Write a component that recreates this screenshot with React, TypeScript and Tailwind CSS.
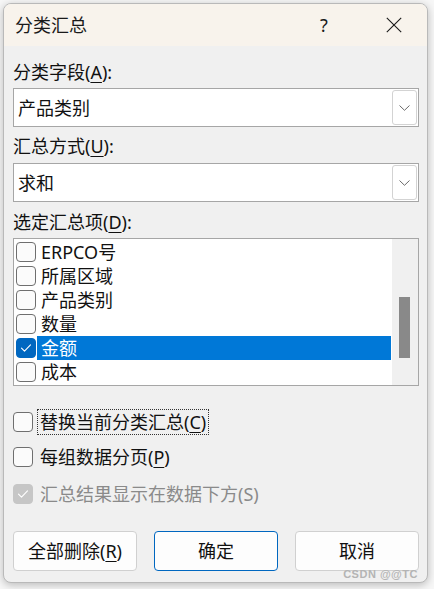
import React from "react";

function Check({ color = "#ffffff" }: { color?: string }) {
  return (
    <svg width="12" height="10" viewBox="0 0 12 10" fill="none">
      <path d="M1.5 5.2 L4.5 8.2 L10.5 1.8" stroke={color} strokeWidth="1.1" strokeLinecap="round" strokeLinejoin="round" />
    </svg>
  );
}

function Box({ checked, disabled }: { checked?: boolean; disabled?: boolean }) {
  if (checked && disabled) {
    return (
      <div className="w-[20px] h-[20px] shrink-0 rounded-[4px] bg-[#c6c6c6] border border-[#c6c6c6] flex items-center justify-center">
        <Check />
      </div>
    );
  }
  if (checked) {
    return (
      <div className="w-[20px] h-[20px] shrink-0 rounded-[4px] bg-[#0067c0] border border-[#0067c0] flex items-center justify-center">
        <Check />
      </div>
    );
  }
  return <div className="w-[20px] h-[20px] shrink-0 rounded-[4px] bg-[#fbfbfb] border border-[#6f6f6f]" />;
}

function Combo({ value }: { value: string }) {
  return (
    <div className="h-[39px] border border-[#a6a6a6] bg-white flex items-center pl-[4px] pr-[1px]">
      <span className="flex-1 text-[18px] leading-[24px] text-[#111]">{value}</span>
      <div className="w-[25px] h-[35px] border border-[#d3d3d3] rounded-[3px] bg-white flex items-center justify-center">
        <svg width="11" height="6" viewBox="0 0 11 6" fill="none">
          <path d="M0.5 0.5 L5.5 5.3 L10.5 0.5" stroke="#6a6a6a" strokeWidth="1" />
        </svg>
      </div>
    </div>
  );
}

const items = ["ERPCO号", "所属区域", "产品类别", "数量", "金额", "成本"];

export default function App() {
  return (
    <div className="w-[434px] h-[589px] overflow-hidden bg-[#f7f7f7] pt-[3px] pl-[3px] font-['Noto_Sans','Noto_Sans_CJK_SC',sans-serif] text-[#111]">
      <div className="relative w-[425px] h-[580px] rounded-[8px] border border-[#b9b9b9] bg-[#f0f0f0] overflow-hidden shadow-[0_2px_8px_rgba(0,0,0,0.25)] flex flex-col">
        {/* title bar */}
        <div className="h-[42px] shrink-0 bg-[#f8f3ec] flex items-center pl-[11px]">
          <span className="text-[18px] leading-[24px] text-[#1a1a1a]">分类汇总</span>
          <span className="ml-auto w-[40px] text-center text-[18px] leading-[24px] text-[#1a1a1a] mr-[30px]">?</span>
          <div className="w-[40px] flex items-center justify-center mr-[13px]">
            <svg width="16" height="16" viewBox="0 0 16 16" fill="none">
              <path d="M0.8 0.8 L15.2 15.2 M15.2 0.8 L0.8 15.2" stroke="#1a1a1a" strokeWidth="1.1" />
            </svg>
          </div>
        </div>

        {/* body */}
        <div className="flex flex-col pl-[9px] pr-[8px] pt-[14px]">
          <div className="text-[18px] leading-[24px]">
            分类字段(<span className="underline underline-offset-[3px] decoration-1">A</span>):
          </div>
          <div className="mt-[4px]">
            <Combo value="产品类别" />
          </div>

          <div className="mt-[7px] text-[18px] leading-[24px]">
            汇总方式(<span className="underline underline-offset-[3px] decoration-1">U</span>):
          </div>
          <div className="mt-[5px]">
            <Combo value="求和" />
          </div>

          <div className="mt-[8px] text-[18px] leading-[24px]">
            选定汇总项(<span className="underline underline-offset-[3px] decoration-1">D</span>):
          </div>
          <div className="mt-[4px] h-[148px] border border-[#a6a6a6] bg-white flex">
            <div className="flex-1 flex flex-col pt-[1px] pl-[2px] pr-[1px]">
              {items.map((t) => {
                const sel = t === "金额";
                return (
                  <div key={t} className="h-[24px] flex items-center">
                    <Box checked={sel} />
                    <div
                      className={
                        sel
                          ? "ml-[1px] flex-1 h-[24px] pl-[4px] bg-[#0078d7] text-white text-[18px] leading-[24px]"
                          : "ml-[1px] flex-1 h-[24px] pl-[4px] text-[18px] leading-[24px]"
                      }
                    >
                      {t}
                    </div>
                  </div>
                );
              })}
            </div>
            <div className="w-[26px] bg-[#f0f0f0] flex flex-col pt-[58px] pl-[7px]">
              <div className="w-[11px] h-[61px] bg-[#898989]" />
            </div>
          </div>

          <div className="mt-[23px] h-[26px] flex items-center">
            <Box />
            <div className="ml-[4px] h-[26px] px-[2px] border border-dotted border-[#333] flex items-center text-[18px] leading-[24px]">
              替换当前分类汇总(<span className="underline underline-offset-[3px] decoration-1">C</span>)
            </div>
          </div>
          <div className="mt-[9px] h-[26px] flex items-center">
            <Box />
            <div className="ml-[4px] h-[26px] px-[3px] flex items-center text-[18px] leading-[24px]">
              每组数据分页(<span className="underline underline-offset-[3px] decoration-1">P</span>)
            </div>
          </div>
          <div className="mt-[11px] h-[26px] flex items-center">
            <Box checked disabled />
            <div className="ml-[4px] h-[26px] px-[3px] flex items-center text-[18px] leading-[24px] text-[#8a8a8a]">
              汇总结果显示在数据下方(S)
            </div>
          </div>

          <div className="mt-[24px] flex gap-[17px]">
            <div className="w-[124px] h-[40px] rounded-[4px] border border-[#d0d0d0] bg-[#fdfdfd] flex items-center justify-center text-[18px] leading-[24px]">
              全部删除(<span className="underline underline-offset-[3px] decoration-1">R</span>)
            </div>
            <div className="w-[124px] h-[40px] rounded-[4px] border border-[#0067c0] bg-[#fdfdfd] flex items-center justify-center text-[18px] leading-[24px]">
              确定
            </div>
            <div className="w-[124px] h-[40px] rounded-[4px] border border-[#d0d0d0] bg-[#fdfdfd] flex items-center justify-center text-[18px] leading-[24px]">
              取消
            </div>
          </div>
        </div>

        <div className="absolute right-[9px] bottom-[2px] text-[11px] leading-[11px] font-bold text-[#b4b4b4] font-['Liberation_Sans',sans-serif] tracking-[0.5px]">
          CSDN @@TC
        </div>
      </div>
    </div>
  );
}
